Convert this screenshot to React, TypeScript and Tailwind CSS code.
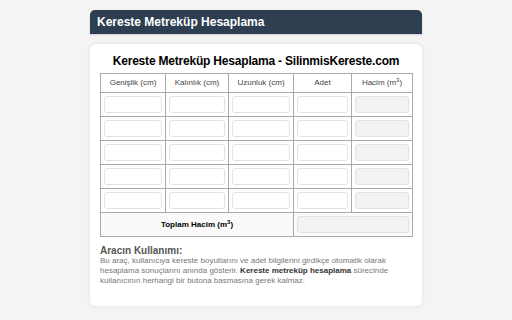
import React from "react";

const cols = ["Genişlik (cm)", "Kalınlık (cm)", "Uzunluk (cm)", "Adet"];

const Field = ({ readOnly = false }: { readOnly?: boolean }) => (
  <input
    type="text"
    readOnly={readOnly}
    className={`block w-full h-[17px] rounded-[3px] border border-[#e2e2e2] outline-none ${
      readOnly ? "bg-[#f2f2f2]" : "bg-white"
    }`}
  />
);

export default function App() {
  const rows = [0, 1, 2, 3, 4];

  return (
    <div className="min-h-[320px] bg-[#f4f4f4] pt-[10px] font-['Liberation_Sans',Arial,sans-serif]">
      <div className="mx-auto w-[332px]">
        {/* Top bar */}
        <div className="h-[24px] rounded-t-[5px] bg-[#2c3e50] px-[7px] flex items-center shadow-[0_1px_2px_rgba(0,0,0,0.15)]">
          <span className="text-white font-bold text-[12px]">Kereste Metreküp Hesaplama</span>
        </div>

        {/* Calculator card */}
        <div className="mt-[10px] bg-white rounded-[6px] shadow-[0_0_4px_rgba(0,0,0,0.08)] px-[10px] pt-[8px] pb-[20px]">
          <h1 className="text-center text-[12px] tracking-[-0.2px] font-bold text-black leading-[18px] mb-[3px] whitespace-nowrap">
            Kereste Metreküp Hesaplama - SilinmisKereste.com
          </h1>

          <table className="w-[312px] border-collapse table-fixed">
            <colgroup>
              <col className="w-[65px]" />
              <col className="w-[63px]" />
              <col className="w-[65px]" />
              <col className="w-[58px]" />
              <col className="w-[61px]" />
            </colgroup>
            <thead>
              <tr className="h-[19px]">
                {cols.map((c) => (
                  <th key={c} className="border border-[#aaa] text-[8px] font-normal text-[#444] p-0">
                    {c}
                  </th>
                ))}
                <th className="border border-[#aaa] text-[8px] font-normal text-[#444] p-0">
                  Hacim (m<sup className="text-[6px]">3</sup>)
                </th>
              </tr>
            </thead>
            <tbody>
              {rows.map((r) => (
                <tr key={r} className="h-[24px]">
                  {cols.map((c) => (
                    <td key={c} className="border border-[#aaa] px-[3px] py-0">
                      <Field />
                    </td>
                  ))}
                  <td className="border border-[#aaa] px-[3px] py-0">
                    <Field readOnly />
                  </td>
                </tr>
              ))}
              <tr className="h-[24px] bg-[#fafafa]">
                <td colSpan={3} className="border border-[#aaa] text-center text-[8px] font-bold text-black p-0">
                  Toplam Hacim (m<sup className="text-[6px]">3</sup>)
                </td>
                <td colSpan={2} className="border border-[#aaa] px-[3px] py-0">
                  <Field readOnly />
                </td>
              </tr>
            </tbody>
          </table>

          <div className="mt-[8px] text-[8px] leading-[10px] text-[#777]">
            <div className="text-[10px] font-semibold text-[#555] leading-[11px]">Aracın Kullanımı:</div>
            <p>
              Bu araç, kullanıcıya kereste boyutlarını ve adet bilgilerini girdikçe otomatik olarak
              hesaplama sonuçlarını anında gösterir.{" "}
              <strong className="text-[#333]">Kereste metreküp hesaplama</strong> sürecinde
              kullanıcının herhangi bir butona basmasına gerek kalmaz.
            </p>
          </div>
        </div>
      </div>
    </div>
  );
}
